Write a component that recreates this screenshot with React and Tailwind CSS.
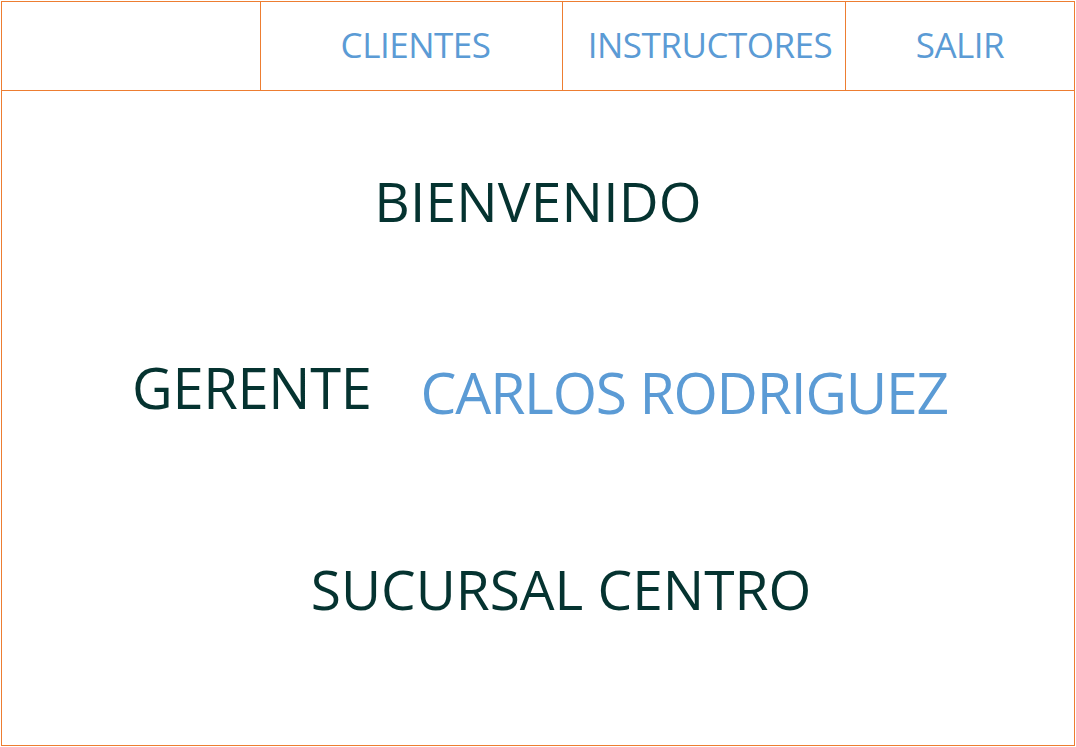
export default function App() {
  const navItem = 'flex items-center justify-center text-[#5b9bd5] text-[35px] tracking-[-0.5px] pb-[4px]';
  const dark = 'text-[#053330]';

  return (
    <div className="w-[1076px] h-[747px] bg-white" style={{ fontFamily: '"Open Sans", "Noto Sans", sans-serif' }}>
      <div className="ml-px mt-px w-[1074px] h-[745px] border border-[#ed7d31] flex flex-col">
        {/* top nav */}
        <div className="grid grid-cols-[259px_302px_283px_1fr] h-[89px] border-b border-[#ed7d31] leading-none">
          <div className="border-r border-[#ed7d31]" />
          <div className={`${navItem} border-r border-[#ed7d31] pl-[8px]`}>CLIENTES</div>
          <div className={`${navItem} border-r border-[#ed7d31] pl-[12px]`}>INSTRUCTORES</div>
          <div className={navItem}>SALIR</div>
        </div>

        {/* body */}
        <div className="flex flex-col items-center leading-none pt-[82px]">
          <div className={`${dark} text-[55px] tracking-[0.2px]`}>BIENVENIDO</div>

          <div className="flex items-start gap-[49px] mt-[131px] ml-[4px]">
            <div className={`${dark} text-[56px] tracking-[-0.3px]`}>GERENTE</div>
            <div className="text-[#5b9bd5] text-[57px] tracking-[-1.2px] mt-[5px]">CARLOS RODRIGUEZ</div>
          </div>

          <div className={`${dark} text-[55px] tracking-[0px] mt-[140px] ml-[46px]`}>SUCURSAL CENTRO</div>
        </div>
      </div>
    </div>
  );
}
